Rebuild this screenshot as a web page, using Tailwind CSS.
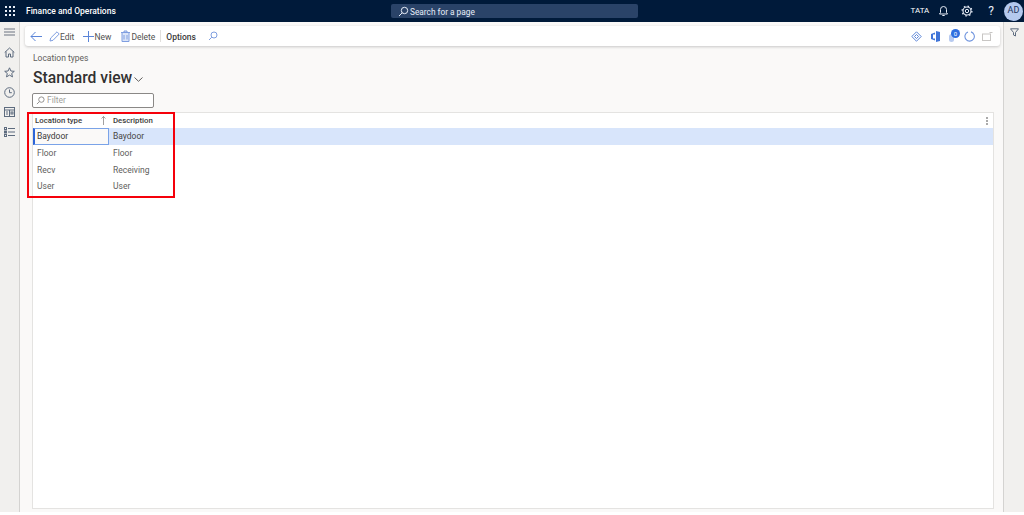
<!DOCTYPE html>
<html><head><meta charset="utf-8"><script src="https://cdn.jsdelivr.net/npm/@tailwindcss/browser@4"></script></head>
<body class="bg-white">
<div class="relative w-[1024px] h-[515px] overflow-hidden flex flex-col font-['Roboto',sans-serif] text-[#323130]">
  <header class="h-[22px] shrink-0 bg-[#001a3a] text-white flex items-center relative">
    <div class="w-[19px] flex justify-center"><svg width="10" height="10" viewBox="0 0 10 10" fill="#e8eef8"><rect x="0" y="0" width="2" height="2"/><rect x="4" y="0" width="2" height="2"/><rect x="8" y="0" width="2" height="2"/><rect x="0" y="4" width="2" height="2"/><rect x="4" y="4" width="2" height="2"/><rect x="8" y="4" width="2" height="2"/><rect x="0" y="8" width="2" height="2"/><rect x="4" y="8" width="2" height="2"/><rect x="8" y="8" width="2" height="2"/></svg></div>
    <span class="ml-[7px] text-[8.5px] font-medium">Finance and Operations</span>
    <div class="absolute left-[391px] top-[4px] w-[247px] h-[14px] rounded-[2px] bg-[#2a4368] flex items-center pl-[7px] gap-[1px] text-[8.300px] text-[#e8eef8]">
      <svg width="11" height="11" viewBox="0 0 11 11" fill="none" stroke="#e8eef8" stroke-width="1"><circle cx="6.5" cy="4.5" r="3.2"/><path d="M4.2 6.8L1 10"/></svg>
      <span class="mt-[2px]">Search for a page</span>
    </div>
    <div class="ml-auto flex items-center">
      <span class="text-[8px] mr-[9px]">TATA</span>
      <svg class="mr-[12px]" width="11" height="12" viewBox="0 0 11 12" fill="none" stroke="#e8eef8" stroke-width="1"><path d="M1.5 9h8L8.5 7.5V4.5a3 3 0 0 0-6 0v3z"/><path d="M4.3 10.5h2.4"/></svg>
      <svg class="mr-[15px]" width="12" height="12" viewBox="0 0 12 12" fill="none" stroke="#e8eef8"><circle cx="6" cy="6" r="1.7"/><circle cx="6" cy="6" r="4" stroke-width="1.1"/><circle cx="6" cy="6" r="4.9" stroke-width="1.3" stroke-dasharray="1.5 2.35"/></svg>
      <span class="text-[12px] leading-none mr-[10px] text-[#e8eef8]">?</span>
      <div class="w-[19px] h-[19px] mr-[1px] rounded-full bg-[#b4c9ee] text-[#22345a] text-[9px] flex items-center justify-center">AD</div>
    </div>
  </header>
  <div class="flex min-h-0 h-[490px]">
    <nav class="w-[20px] shrink-0 bg-[#f1f0ee] border-r border-[#d4d3d1] flex flex-col items-center pt-[6px] gap-[9px] text-[#5f6b7c]">
      <svg width="11" height="8" viewBox="0 0 11 8" stroke="#6b7280" stroke-width="1"><path d="M0 1h11M0 4h11M0 7h11"/></svg>
      <svg class="mt-[2px]" width="11" height="11" viewBox="0 0 11 11" fill="none" stroke="#5d6b7e"><path d="M.7 5.5L5.5 1l4.8 4.5M2 4.5V10h2.5V7h2v3H9V4.5"/></svg>
      <svg width="11" height="11" viewBox="0 0 11 11" fill="none" stroke="#5d6b7e"><path d="M5.5.8l1.4 3.2 3.4.3-2.6 2.2.8 3.4-3-1.8-3 1.8.8-3.4L.7 4.3l3.4-.3z"/></svg>
      <svg width="11" height="11" viewBox="0 0 11 11" fill="none" stroke="#5d6b7e"><circle cx="5.5" cy="5.5" r="4.8"/><path d="M5.5 2.5v3.2h2.3"/></svg>
      <svg width="11" height="10" viewBox="0 0 11 10" fill="none" stroke="#5d6b7e"><rect x=".5" y=".5" width="10" height="9"/><path d="M.5 3h10M5.5 3v6.5M2 5h2M2 7h2"/><rect x="7" y="5" width="2" height="2"/></svg>
      <svg class="mt-[1px]" width="11" height="10" viewBox="0 0 11 10" fill="none" stroke="#5d6b7e"><path d="M4 1.5h7M4 5h7M4 8.500h7"/><rect x=".5" y=".5" width="2" height="2"/><rect x=".5" y="4" width="2" height="2"/><rect x=".5" y="7.500" width="2" height="2"/></svg>
    </nav>
    <main class="flex-1 min-w-0 bg-[#faf9f8] flex flex-col">
      <div class="ml-[5px] mr-[3px] mt-[4px] h-[20px] shrink-0 bg-white rounded-[3px] shadow-[0_1px_3px_rgba(0,0,0,0.2)] flex items-center text-[8.500px] text-[#50504f]">
        <svg class="ml-[5px]" width="13" height="11" viewBox="0 0 13 11" fill="none" stroke="#5b85d8"><path d="M12 5.500H1M5.500 1L1 5.500 5.500 10"/></svg>
        <svg class="ml-[6px]" width="11" height="11" viewBox="0 0 11 11" fill="none" stroke="#7f9ee0"><path d="M1 10l.7-3L8 .8l2.200 2.200L4 9.300z"/></svg>
        <span class="mt-[2px]">Edit</span>
        <svg class="ml-[9px]" width="11" height="11" viewBox="0 0 11 11" stroke="#5b85d8"><path d="M5.500 0v11M0 5.500h11"/></svg>
        <span class="mt-[2px]">New</span>
        <svg class="ml-[10px]" width="9" height="12" viewBox="0 0 9 12" fill="#dbe5f8" stroke="#7f9ee0"><path d="M1 2.500h7V11.500H1zM3 2.500V1h3v1.500M0 2.500h9M3 5v4.500M6 5v4.500"/></svg>
        <span class="mt-[2px] ml-[1px]">Delete</span>
        <div class="ml-[5px] w-px h-[12px] bg-[#e1dfdd]"></div>
        <span class="mt-[2px] ml-[5px] font-medium text-[#3b3a39]">Options</span>
        <svg class="ml-[12px]" width="10" height="10" viewBox="0 0 10 10" fill="none" stroke="#7f9ee0"><circle cx="6" cy="4" r="3"/><path d="M3.800 6.200L1 9"/></svg>
        <div class="ml-auto flex items-center mr-[7px]">
          <svg class="mr-[1px]" width="11" height="11" viewBox="0 0 11 11" fill="none" stroke="#5b85d8"><path d="M5.500.8L10.200 5.500 5.500 10.200.8 5.500z"/><path d="M5.500 3.500L7.500 5.500 5.500 7.500 3.500 5.500z"/></svg>
          <svg class="ml-[8px]" width="9" height="11" viewBox="0 0 9 11" fill="#3f74d8"><path d="M5 0l4 1v9l-4 1zM0 3l4-1.500v8L0 8z" /><rect x="2" y="3.500" width="2.500" height="4" fill="#fff"/></svg>
          <div class="ml-[9px] relative w-[11px] h-[12px]"><div class="absolute left-0 bottom-0 w-[5px] h-[8px] rounded-full bg-[#b7caf0]"></div><div class="absolute right-0 top-[-1px] w-[9px] h-[9px] rounded-full bg-[#2f6fe0] text-white text-[6px] leading-[9px] text-center">0</div></div>
          <svg class="ml-[4px]" width="11" height="11" viewBox="0 0 11 11" fill="none" stroke="#6f94de" stroke-width="1.100"><path d="M4 1A4.700 4.700 0 1 0 7 .9"/></svg>
          <svg class="ml-[7px]" width="11" height="10" viewBox="0 0 11 10" fill="none" stroke="#c8c6c4"><rect x=".5" y="3" width="8" height="6.500"/><path d="M7.500 1.500h3"/></svg>
        </div>
      </div>
      <div class="ml-[13px] mt-[7px] text-[8.500px] leading-[10px] text-[#605e5c]">Location types</div>
      <div class="ml-[13px] mt-[5px] flex items-center h-[19px]">
        <span class="text-[15.700px] font-medium leading-none text-[#323130]">Standard view</span>
        <svg class="ml-[2px] mt-[3px]" width="9" height="5" viewBox="0 0 9 5" fill="none" stroke="#605e5c"><path d="M.5.500l4 3.800 4-3.800"/></svg>
      </div>
      <div class="ml-[12px] mt-[6px] w-[122px] h-[15px] shrink-0 bg-white border border-[#8a8886] rounded-[2px] flex items-center pl-[3px] text-[8.500px] text-[#a19f9d] gap-[2px]">
        <svg width="9" height="9" viewBox="0 0 10 10" fill="none" stroke="#8a8886"><circle cx="6" cy="4" r="3"/><path d="M3.800 6.200L1 9"/></svg>
        <span>Filter</span>
      </div>
      <section class="ml-[12px] mr-[9px] mt-[4px] h-[397px] shrink-0 bg-white border border-[#e4e3e1] text-[8.500px] flex flex-col relative">
        <div class="h-[15px] flex items-center font-medium text-[7.800px] text-[#3b3a39] pl-[2px]">
          <span class="w-[66px]">Location type</span>
          <svg width="5" height="9" viewBox="0 0 5 9" fill="none" stroke="#8a8886" stroke-width=".8"><path d="M2.500 9V.5M.5 2.500l2-2 2 2"/></svg>
          <span class="ml-[7px]">Description</span>
          <div class="ml-auto mr-[5px] flex flex-col gap-[1px]"><i class="block w-[2px] h-[2px] bg-[#aaa]"></i><i class="block w-[2px] h-[2px] bg-[#aaa]"></i><i class="block w-[2px] h-[2px] bg-[#aaa]"></i></div>
        </div>
        <div class="h-[17px] bg-[#d8e5fb] flex items-center">
          <div class="w-[76px] h-[17px] bg-[#faf9f8] border border-[#7aa3e8] border-l-[2px] border-l-[#2b64d8] pl-[2px] flex items-center text-[#3b3a39]">Baydoor</div>
          <span class="ml-[4px] text-[#484644]">Baydoor</span>
        </div>
        <div class="h-[17px] flex items-center text-[#605e5c]"><span class="w-[80px] pl-[4px]">Floor</span><span>Floor</span></div>
        <div class="h-[16px] flex items-center text-[#605e5c]"><span class="w-[80px] pl-[4px]">Recv</span><span>Receiving</span></div>
        <div class="h-[17px] flex items-center text-[#605e5c]"><span class="w-[80px] pl-[4px]">User</span><span>User</span></div>
      </section>
    </main>
    <aside class="w-[21px] shrink-0 bg-[#f1f0ee] border-l border-[#d4d3d1] flex justify-center pt-[6px]">
      <svg width="9" height="9" viewBox="0 0 9 9" fill="none" stroke="#5d6b7e"><path d="M.5.800h8L5.500 4.500V8L3.500 7V4.500z"/></svg>
    </aside>
  </div>
  <div class="absolute left-[27px] top-[112px] w-[148px] h-[86px] border-2 border-[#f5000a]"></div>
</div>
</body></html>
